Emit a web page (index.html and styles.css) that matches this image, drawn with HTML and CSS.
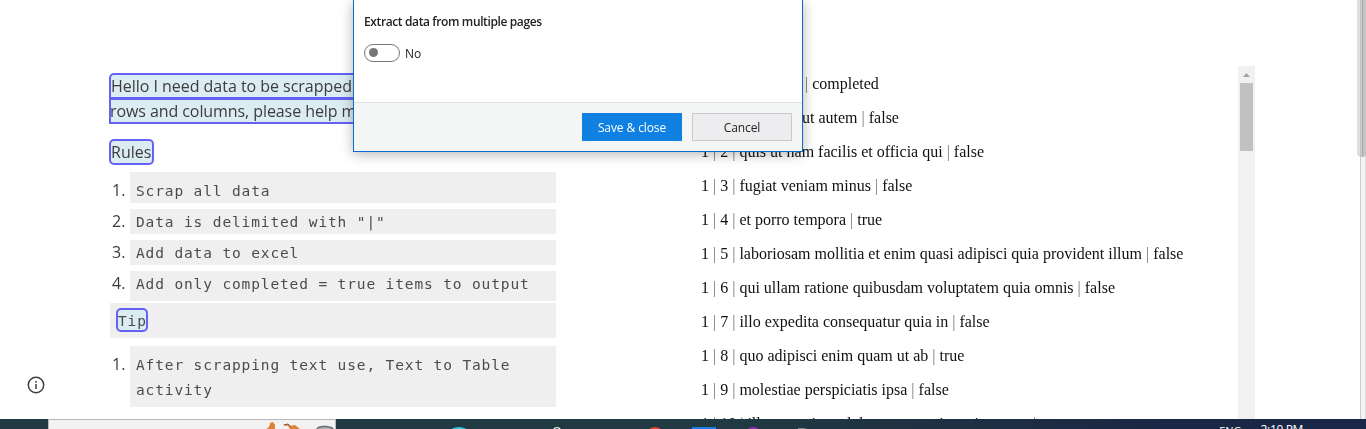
FILE: index.html
```html
<!DOCTYPE html>
<html lang="en">
<head>
<meta charset="utf-8">
<title>Data extraction</title>
<link rel="stylesheet" href="styles.css">
</head>
<body>
<main class="workspace">
  <aside class="rail">
    <svg class="info" width="18" height="18" viewBox="0 0 18 18" fill="none" stroke="#3c4043" stroke-width="1.5"><circle cx="9" cy="9" r="7.7"/><path d="M9 8v5M9 5v1.7"/></svg>
  </aside>
  <section class="notes">
    <div class="intro"><div class="marked first">Hello I need data to be scrapped</div><div class="marked second">rows and columns, please help m</div></div>
    <h2 class="tag">Rules</h2>
    <ol class="steps">
      <li class="step tall"><span class="num">1.</span><code class="code">Scrap all data</code></li>
      <li class="step"><span class="num">2.</span><code class="code">Data is delimited with "|"</code></li>
      <li class="step"><span class="num">3.</span><code class="code">Add data to excel</code></li>
      <li class="step last"><span class="num">4.</span><code class="code">Add only completed = true items to output</code></li>
    </ol>
    <div class="tip"><span class="tag tip-tag">Tip</span></div>
    <ol class="steps">
      <li class="step double"><span class="num">1.</span><code class="code">After scrapping text use, Text to Table<br>activity</code></li>
    </ol>
  </section>
  <section class="data">
    <p class="row head"><i>|</i> completed</p>
    <p class="row second-row">ut autem <i>|</i> false</p>
    <p class="row">1 <i>|</i> 2 <i>|</i> quis ut nam facilis et officia qui <i>|</i> false</p>
    <p class="row">1 <i>|</i> 3 <i>|</i> fugiat veniam minus <i>|</i> false</p>
    <p class="row">1 <i>|</i> 4 <i>|</i> et porro tempora <i>|</i> true</p>
    <p class="row">1 <i>|</i> 5 <i>|</i> laboriosam mollitia et enim quasi adipisci quia provident illum <i>|</i> false</p>
    <p class="row">1 <i>|</i> 6 <i>|</i> qui ullam ratione quibusdam voluptatem quia omnis <i>|</i> false</p>
    <p class="row">1 <i>|</i> 7 <i>|</i> illo expedita consequatur quia in <i>|</i> false</p>
    <p class="row">1 <i>|</i> 8 <i>|</i> quo adipisci enim quam ut ab <i>|</i> true</p>
    <p class="row">1 <i>|</i> 9 <i>|</i> molestiae perspiciatis ipsa <i>|</i> false</p>
    <p class="row">1 <i>|</i> 10 <i>|</i> illo est ratione doloremque quia maiores aut <i>|</i> true</p>
  </section>
  <div class="scroll"><svg class="arrow" width="7" height="4" viewBox="0 0 7 4"><path d="M3.5 0L7 4H0z" fill="#a3a3a3"/></svg><div class="thumb"></div></div>
  <div class="page-scroll"><div class="page-thumb"></div></div>
</main>
<footer class="taskbar">
  <div class="search">
    <svg width="70" height="9" viewBox="0 0 70 9"><path d="M0 9Q4 7 4 3L7 2L9 5V9zM17 5Q20 3 24 6L29 5L34 9H24L22 6z" fill="#de8138"/><path d="M18 5l4-1 3 3" stroke="#874a2b" fill="none"/><path d="M51 9Q52 6 60 6.500Q66 7 67 9" fill="#b2b5b8" stroke="#686b70" stroke-width="1.500"/></svg>
  </div>
  <svg class="apps" width="500" height="10" viewBox="0 0 500 10"><ellipse cx="123" cy="14" rx="10" ry="6" fill="#2bc5d5"/><circle cx="221" cy="12" r="3.4" fill="none" stroke="#e5eaed" stroke-width="1.4"/><circle cx="319" cy="17" r="9" fill="#e94235"/><path d="M356 8h24v2h-24z" fill="#1680e5"/><circle cx="417" cy="17" r="9" fill="#8b2ca8"/><path d="M462 9h6l3 1h-9z" fill="#7e8588"/></svg>
  <div class="status"><span class="lang">ENG</span><span class="time">2:10 PM</span></div>
</footer>
<div class="dialog">
  <div class="dialog-body">
    <div class="title">Extract data from multiple pages</div>
    <div class="toggle-row"><span class="toggle"></span><span class="toggle-label">No</span></div>
  </div>
  <div class="dialog-foot"><button class="btn primary">Save &amp; close</button><button class="btn">Cancel</button></div>
</div>
</body>
</html>
```
FILE: styles.css
```css
* { box-sizing: border-box; }
body { margin: 0; height: 429px; overflow: hidden; background: #fff; position: relative; }
.workspace { display: flex; height: 419px; overflow: hidden; will-change: transform; }
.rail { width: 109px; padding: 376px 0 0 27px; flex: none; }
.info { display: block; }
.notes { width: 447px; padding-top: 73px; flex: none; font: 16px/25px "Open Sans", sans-serif; color: #3c3c3c; }
.intro { height: 51px; overflow: hidden; white-space: nowrap; }
.marked { background: #dcecf3; border: 2px solid #6563f6; line-height: 23px; letter-spacing: -0.03px; height: 26px; }
.first { border-radius: 5px 0 0 0; }
.second { height: 25px; padding-left: 0; text-indent: -1px; border-top-width: 1px; letter-spacing: -0.08px; }
.tag { display: block; width: 45px; height: 26px; margin: 15px 0 7px; border: 2px solid #6563f6; border-radius: 5px; background: #dcecf3; font-size: 16px; font-weight: 400; line-height: 22px; }
.steps { list-style: none; margin: 0; padding: 0; }
.step { display: flex; height: 25px; margin-bottom: 6px; }
.num { width: 21px; padding-left: 3px; flex: none; }
.code { flex: 1; background: #efefef; padding-left: 6px; font: 14.5px/26px "DejaVu Sans Mono", monospace; letter-spacing: 0.87px; white-space: nowrap; color: #4c4c4c; }
.tall { height: 31px; }
.tall .num, .tall .code { padding-top: 6px; }
.last { height: 30px; margin-bottom: 2px; }
.tip { height: 35px; margin: 0 0 8px 1px; padding: 5px 6px; background: #efefef; }
.tip-tag { margin: 0; width: 32px; height: 24px; font: 14.5px/22px "DejaVu Sans Mono", monospace; letter-spacing: 0.87px; color: #4c4c4c; }
.double { height: 61px; }
.double .num, .double .code { padding-top: 6px; }
.double .code { line-height: 25px; padding-top: 7px; }
.data { width: 537px; margin-left: 145px; padding-top: 67px; flex: none; font: 16px/34px "Liberation Serif", serif; color: #111; }
.row { height: 34px; margin: 0; white-space: nowrap; }
.head { padding-left: 104px; }
.second-row { padding-left: 101px; }
.row i { font-style: normal; color: #777; }
.scroll { width: 17px; height: 353px; margin-top: 66px; padding: 7px 2px 0; background: #f1f1f1; flex: none; }
.arrow { display: block; margin: 0 0 6px 3px; }
.thumb { height: 68px; background: #c1c1c1; }
.page-scroll { width: 9px; margin-left: auto; background: linear-gradient(90deg, transparent 3px, #ccc 3px, #ccc 4px, #f4f4f4 4px, #f4f4f4 8px, #ddd 8px); }
.page-thumb { height: 157px; border-radius: 0 0 3px 4px; background: linear-gradient(90deg, #dedede 3px, #bdbdbd 3px, #d2d2d2 5px, #a8a8a8 5px, #a8a8a8 6px, #c3c3c3 6px); }
.taskbar { display: flex; height: 10px; overflow: hidden; background: linear-gradient(90deg, #213a43 0, #213942 55%, #1b2744 85%, #192648); }
.search { width: 288px; height: 10px; margin-left: 48px; padding-left: 217px; border: 1px solid #b8b8b8; border-bottom: 0; background: #f2f2f2; flex: none; }
.search svg, .apps { display: block; }
.apps { flex: none; }
.status { display: flex; margin-left: auto; padding-right: 63px; gap: 19px; color: #fff; font: 12px/16px "Open Sans", sans-serif; white-space: nowrap; }
.lang { padding-top: 4px; font-size: 11px; }
.time { padding-top: 3px; letter-spacing: -0.35px; }
.dialog { position: absolute; left: 353px; top: 0; width: 450px; height: 152px; border: 1px solid #0b6bd3; border-top: 0; background: #fff; box-shadow: 0 2px 12px rgba(0,0,0,.3); font: 12px/18px "Open Sans", sans-serif; color: #222; }
.dialog-body { height: 102px; padding: 13px 10px 0; }
.title { font-weight: 600; letter-spacing: -0.38px; }
.toggle-row { display: flex; align-items: center; gap: 5px; margin-top: 13px; }
.toggle-label { height: 18px; line-height: 20px; }
.toggle { width: 36px; height: 18px; border: 1px solid #777; border-radius: 9px; padding: 3px 4px; }
.toggle::before { content: ""; display: block; width: 9px; height: 9px; border-radius: 50%; background: #767676; }
.dialog-foot { height: 49px; padding: 10px; display: flex; justify-content: flex-end; gap: 10px; border-top: 1px solid #dfe2e3; background: #f4f6f6; }
.btn { width: 100px; height: 28px; padding: 2px 0 0; border: 1px solid #c8c9cb; background: #ededef; color: #222; font: 12px/24px "Open Sans", sans-serif; letter-spacing: -0.1px; }
.primary { border-color: #1080e3; background: #1080e3; color: #fff; }
```
